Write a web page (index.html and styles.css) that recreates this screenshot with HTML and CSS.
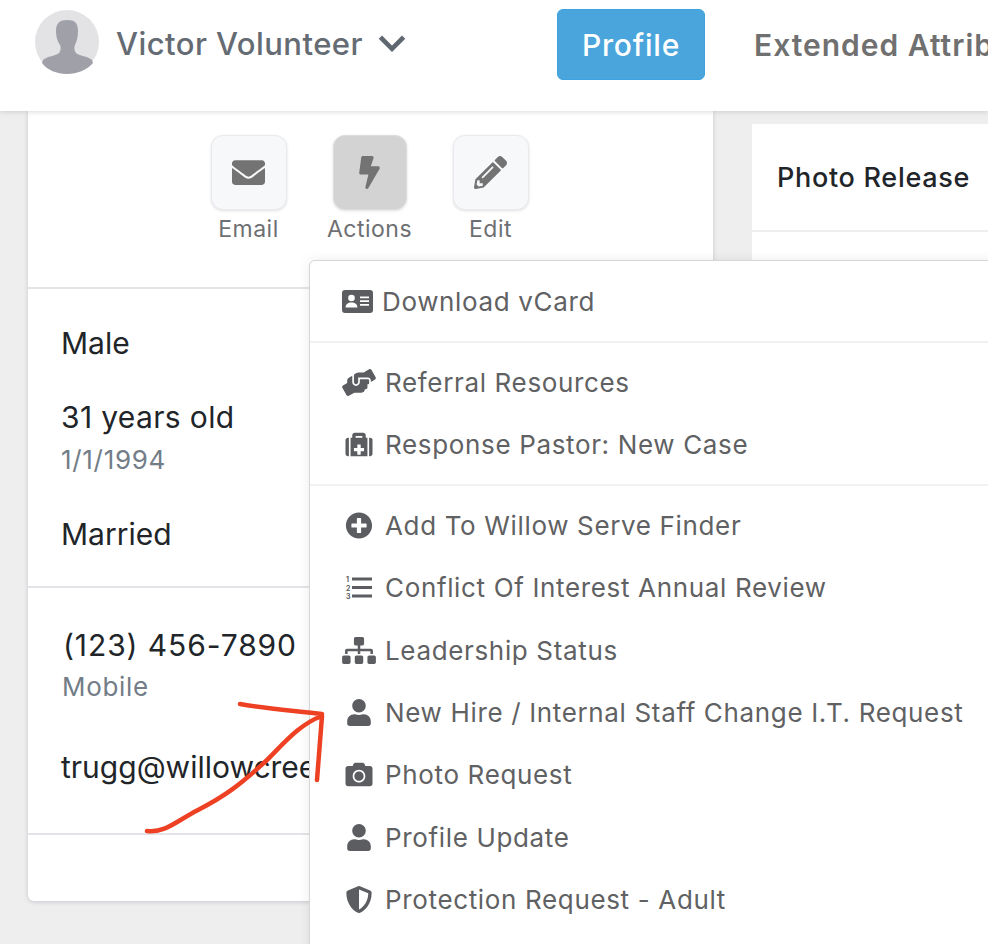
FILE: index.html
```html
<!DOCTYPE html>
<html lang="en">
<head>
<meta charset="utf-8">
<title>Victor Volunteer</title>
<link rel="stylesheet" href="styles.css">
</head>
<body>
<header class="topbar">
  <div class="person">
    <svg class="avatar" viewBox="0 0 64 64"><circle cx="32" cy="32" r="32" fill="#e3e3e6"/><path fill="#a0a0a8" d="M32 10c8 0 11 3 11 11 0 5-1 10-3 14-1 3-1 5 1 8 3 3 12 3 16 7l1 3C52 60 42 64 32 64S12 60 7 53l1-3c4-4 13-4 16-7 2-3 2-5 1-8-3-4-4-9-4-14 0-8 4-11 11-11z"/></svg>
    <span class="person-name">Victor Volunteer</span>
    <svg class="chevron" viewBox="0 0 28 18"><path d="M3 3l11 11L25 3" fill="none" stroke="#5f6770" stroke-width="4.4"/></svg>
  </div>
  <nav class="tabs">
    <a class="tab tab-active">Profile</a>
    <a class="tab">Extended Attributes</a>
  </nav>
</header>

<main class="content">
  <section class="card profile-card">
    <div class="actions">
      <div class="action">
        <span class="action-btn"><svg class="action-icon" viewBox="0 0 512 512"><path d="M502.3 190.8c3.9-3.1 9.7-.2 9.7 4.7V400c0 26.5-21.5 48-48 48H48c-26.5 0-48-21.5-48-48V195.6c0-5 5.7-7.8 9.7-4.7 22.4 17.4 52.1 39.5 154.1 113.6 21.1 15.4 56.7 47.8 92.2 47.6 35.7.3 72-32.8 92.3-47.6 102-74.1 131.6-96.3 154-113.7zM256 320c23.2.4 56.6-29.2 73.4-41.4 132.7-96.3 142.8-104.7 173.4-128.7 5.8-4.5 9.2-11.5 9.2-18.9v-19c0-26.5-21.5-48-48-48H48C21.5 64 0 85.5 0 112v19c0 7.4 3.4 14.3 9.2 18.9 30.6 23.9 40.7 32.4 173.4 128.7 16.8 12.2 50.2 41.8 73.4 41.4z"/></svg></span>
        <span class="action-label">Email</span>
      </div>
      <div class="action action-narrow">
        <span class="action-btn action-btn-on"><svg class="action-icon" viewBox="0 0 320 512"><path d="M296 160H180.6l42.6-129.8C227.2 15 215.7 0 200 0H56C44 0 33.8 8.9 32.2 20.8l-32 240C-1.7 275.2 9.5 288 24 288h118.7L96.6 482.5c-3.6 15.2 8 29.5 23.3 29.5 8.4 0 16.4-4.4 20.8-12l176-304c9.3-15.9-2.2-36-20.7-36z"/></svg></span>
        <span class="action-label">Actions</span>
      </div>
      <div class="action">
        <span class="action-btn"><svg class="action-icon" viewBox="0 0 512 512"><path d="M497.9 142.1l-46.1 46.1c-4.7 4.7-12.3 4.7-17 0l-111-111c-4.7-4.7-4.7-12.3 0-17l46.1-46.1c18.7-18.7 49.1-18.7 67.9 0l60.1 60.1c18.8 18.7 18.8 49.1 0 67.9zM284.2 99.8L21.6 362.4.4 483.9c-2.9 16.4 11.4 30.6 27.8 27.8l121.5-21.3 262.6-262.6c4.7-4.7 4.7-12.3 0-17l-111-111c-4.8-4.7-12.4-4.7-17.1 0zM124.1 339.9c-5.5-5.5-5.5-14.3 0-19.8l154-154c5.5-5.5 14.3-5.5 19.8 0s5.5 14.3 0 19.8l-154 154c-5.5 5.5-14.3 5.5-19.8 0zM88 424h48v36.3l-64.5 11.3-31.1-31.1L51.7 376H88v48z"/></svg></span>
        <span class="action-label">Edit</span>
      </div>
    </div>
    <div class="facts">
      <p class="fact">Male</p>
      <p class="fact fact-age">31 years old</p>
      <p class="fact-sub fact-sub-date">1/1/1994</p>
      <p class="fact fact-married">Married</p>
    </div>
    <div class="contact">
      <p class="fact fact-phone">(123) 456-7890</p>
      <p class="fact-sub fact-sub-mobile">Mobile</p>
      <p class="fact fact-email">trugg@willowcreek.org</p>
    </div>
    <div class="card-foot"></div>
  </section>

  <section class="card release-card">
    <h2 class="release-title">Photo Release</h2>
    <div class="release-body"></div>
  </section>
</main>

<div class="menu">
  <div class="menu-group">
    <a class="menu-item menu-item-tight"><svg class="menu-icon" viewBox="0 0 31 24"><rect width="31" height="23" y=".5" rx="3"/><circle cx="9.5" cy="8.5" r="3.3" fill="#fff"/><path fill="#fff" d="M3.6 18c0-3.5 2.4-5 5.9-5s5.9 1.5 5.900 5z"/><path fill="#fff" d="M18 7h9v1.700h-9zM18 10.800h9v1.700h-9zM18 14.600h9v1.700h-9z"/></svg><span>Download vCard</span></a>
  </div>
  <div class="menu-group">
    <a class="menu-item"><svg class="menu-icon" viewBox="0 0 640 512"><path d="M488 192H336v56c0 39.7-32.3 72-72 72s-72-32.3-72-72V126.4l-64.9 39C107.8 176.9 96 197.8 96 220.2v47.3l-80 46.2C.7 322.5-4.6 342.1 4.3 357.4l80 138.6c8.8 15.3 28.4 20.5 43.7 11.7L231.4 448H368c35.3 0 64-28.7 64-64h16c17.7 0 32-14.3 32-32v-64h8c13.3 0 24-10.7 24-24v-48c0-13.3-10.7-24-24-24zm147.7-37.4L555.7 16C546.9.7 527.3-4.5 512 4.3L408.6 64H306.4c-12 0-23.7 3.4-33.9 9.7L239 94.6c-9.4 5.8-15 16.1-15 27.1V248c0 22.1 17.9 40 40 40s40-17.9 40-40v-88h184c30.9 0 56 25.1 56 56v28.5l80-46.2c15.3-8.9 20.5-28.4 11.7-43.7z"/></svg><span>Referral Resources</span></a>
    <a class="menu-item"><svg class="menu-icon" viewBox="0 0 512 512"><path d="M96 480h320V128h-32V80c0-26.51-21.49-48-48-48H176c-26.51 0-48 21.49-48 48v48H96v352zm96-384h128v32H192V96zm160 248v32c0 4.418-3.582 8-8 8h-56v56c0 4.418-3.582 8-8 8h-48c-4.418 0-8-3.582-8-8v-56h-56c-4.418 0-8-3.582-8-8v-48c0-4.418 3.582-8 8-8h56v-56c0-4.418 3.582-8 8-8h48c4.418 0 8 3.582 8 8v56h56c4.418 0 8 3.582 8 8v16zM512 160v272c0 26.51-21.49 48-48 48h-16V128h16c26.51 0 48 14 48 32zM64 480H48c-26.51 0-48-21.49-48-48V176c0-26.51 21.49-48 48-48h16v352z"/></svg><span>Response Pastor: New Case</span></a>
  </div>
  <div class="menu-group">
    <a class="menu-item"><svg class="menu-icon" viewBox="0 0 512 512"><path d="M256 8C119 8 8 119 8 256s111 248 248 248 248-111 248-248S393 8 256 8zm144 276c0 6.6-5.4 12-12 12h-92v92c0 6.6-5.4 12-12 12h-56c-6.6 0-12-5.4-12-12v-92h-92c-6.6 0-12-5.4-12-12v-56c0-6.6 5.4-12 12-12h92v-92c0-6.6 5.4-12 12-12h56c6.6 0 12 5.4 12 12v92h92c6.6 0 12 5.4 12 12v56z"/></svg><span>Add To Willow Serve Finder</span></a>
    <a class="menu-item"><svg class="menu-icon" viewBox="0 0 34 26"><text class="list-num" x="4" y="7.500">1</text><text class="list-num" x="4" y="16">2</text><text class="list-num" x="4" y="24.500">3</text><path d="M10 3h20v3H10zM10 11.500h20v3H10zM10 20h20v3H10z"/></svg><span>Conflict Of Interest Annual Review</span></a>
    <a class="menu-item"><svg class="menu-icon" viewBox="0 0 640 512"><path d="M128 352H32c-17.670 0-32 14.330-32 32v96c0 17.670 14.330 32 32 32h96c17.670 0 32-14.330 32-32v-96c0-17.670-14.330-32-32-32zm-24-80h192v48h48v-48h192v48h48v-57.590c0-21.170-17.230-38.410-38.410-38.410H344v-64h40c17.670 0 32-14.330 32-32V32c0-17.670-14.330-32-32-32H256c-17.670 0-32 14.330-32 32v96c0 17.670 14.330 32 32 32h40v64H94.410C73.230 224 56 241.230 56 262.410V320h48v-48zm264 80h-96c-17.670 0-32 14.330-32 32v96c0 17.670 14.330 32 32 32h96c17.670 0 32-14.330 32-32v-96c0-17.670-14.330-32-32-32zm240 0h-96c-17.670 0-32 14.330-32 32v96c0 17.670 14.330 32 32 32h96c17.670 0 32-14.330 32-32v-96c0-17.670-14.330-32-32-32z"/></svg><span>Leadership Status</span></a>
    <a class="menu-item"><svg class="menu-icon" viewBox="0 0 448 512"><path d="M224 256c70.700 0 128-57.300 128-128S294.700 0 224 0 96 57.300 96 128s57.300 128 128 128zm89.600 32h-16.700c-22.200 10.200-46.900 16-72.900 16s-50.600-5.800-72.900-16h-16.700C60.200 288 0 348.200 0 422.400V464c0 26.500 21.500 48 48 48h352c26.500 0 48-21.500 48-48v-41.600c0-74.200-60.200-134.400-134.400-134.400z"/></svg><span>New Hire / Internal Staff Change I.T. Request</span></a>
    <a class="menu-item"><svg class="menu-icon" viewBox="0 0 512 512"><path d="M512 144v288c0 26.500-21.500 48-48 48H48c-26.500 0-48-21.500-48-48V144c0-26.500 21.500-48 48-48h88l12.300-32.900c7-18.700 24.900-31.100 44.900-31.100h125.500c20 0 37.900 12.400 44.900 31.100L376 96h88c26.500 0 48 21.500 48 48zM376 288c0-66.200-53.800-120-120-120s-120 53.800-120 120 53.800 120 120 120 120-53.800 120-120zm-32 0c0 48.500-39.500 88-88 88s-88-39.500-88-88 39.500-88 88-88 88 39.500 88 88z"/></svg><span>Photo Request</span></a>
    <a class="menu-item"><svg class="menu-icon" viewBox="0 0 448 512"><path d="M224 256c70.700 0 128-57.300 128-128S294.700 0 224 0 96 57.300 96 128s57.300 128 128 128zm89.600 32h-16.700c-22.200 10.200-46.900 16-72.900 16s-50.600-5.800-72.900-16h-16.700C60.200 288 0 348.200 0 422.400V464c0 26.500 21.500 48 48 48h352c26.500 0 48-21.500 48-48v-41.600c0-74.200-60.200-134.400-134.400-134.400z"/></svg><span>Profile Update</span></a>
    <a class="menu-item"><svg class="menu-icon" viewBox="0 0 512 512"><path d="M466.500 83.700l-192-80a48.150 48.150 0 0 0-36.900 0l-192 80C27.700 91.100 16 108.600 16 128c0 198.500 114.500 335.700 221.500 380.300 11.800 4.900 25.100 4.900 36.900 0C360.100 472.600 496 349.300 496 128c0-19.400-11.700-36.900-29.500-44.300zM256.100 446.300l-.1-381 175.900 73.300c-3.300 151.400-82.100 261.100-175.800 307.700z"/></svg><span>Protection Request - Adult</span></a>
  </div>
</div>

<svg class="scribble" viewBox="0 0 988 944"><path d="M147 831C165 833 175 822 198 810C225 796 240 785 267 760C285 742 300 724 322 716M240 704C265 709 300 711 322 714M322 716L317 780"/></svg>
</body>
</html>
```
FILE: styles.css
```css
* { box-sizing: border-box; }
html, body { margin: 0; height: 944px; overflow: hidden; }
body {
  position: relative;
  background: #eeeeee;
  font-family: Inter, "Liberation Sans", sans-serif;
  color: #212529;
}
p, h2 { margin: 0; }

.topbar {
  position: relative;
  z-index: 2;
  display: flex;
  align-items: flex-start;
  height: 111px;
  padding: 9px 0 0 35px;
  background: #fff;
  box-shadow: 0 1px 5px rgba(0, 0, 0, .14);
  overflow: hidden;
}
.person { display: flex; align-items: center; flex: none; width: 522px; height: 66px; }
.avatar { width: 64px; height: 64px; flex: none; }
.person-name { margin: 2px 0 0 17px; font-size: 31px; letter-spacing: .45px; font-weight: 500; color: #646b73; white-space: nowrap; }
.chevron { width: 30px; height: 19px; margin: 2px 0 0 14px; }
.tabs { display: flex; align-items: center; gap: 49px; flex: none; }
.tab { font-size: 30px; letter-spacing: 1px; font-weight: 600; color: #707070; white-space: nowrap; }
.tab-active {
  display: flex; align-items: center; justify-content: center;
  width: 148px; height: 71px;
  background: #4aa5dc; border: 1px solid #3ea2de; border-radius: 6px;
  color: #fff; font-weight: 500; font-size: 30px; letter-spacing: .8px;
}

.content { display: flex; align-items: flex-start; gap: 39px; padding-left: 28px; }
.card { background: #fff; }
.profile-card {
  width: 685px; flex: none;
  border-radius: 0 0 6px 6px;
  box-shadow: 0 1px 4px rgba(60, 70, 90, .22);
}
.actions {
  display: flex; justify-content: center; gap: 46px;
  height: 178px; padding: 24px 2px 0 0;
  border-bottom: 2px solid #e2e4e8;
}
.action { display: flex; flex-direction: column; align-items: center; width: 76px; }
.action-narrow { width: 74px; }
.action-btn {
  display: flex; align-items: center; justify-content: center;
  width: 100%; height: 75px;
  background: #f7f8fa; border: 1px solid #e9eaee; border-radius: 12px;
  box-shadow: 0 1px 3px rgba(0, 0, 0, .12);
}
.action-btn-on { background: #d3d3d3; border-color: #dcdcdc; }
.action-icon { width: 33px; height: 33px; fill: #737373; }
.action-label { margin-top: 5px; font-size: 23px; letter-spacing: .5px; line-height: 28px; color: #6d6f72; white-space: nowrap; }

.facts { height: 299px; padding: 34px 0 0 33px; border-bottom: 2px solid #e2e4e8; }
.contact { height: 247px; padding: 37px 0 0 33px; border-bottom: 2px solid #e2e4e8; overflow: hidden; }
.card-foot { height: 66px; }
.fact { font-size: 30px; line-height: 40px; color: #212529; white-space: nowrap; }
.fact-age { margin-top: 34px; letter-spacing: .35px; }
.fact-sub { font-size: 26px; line-height: 34px; color: #737d87; letter-spacing: .7px; }
.fact-sub-date { margin-top: 6px; }
.fact-married { margin-top: 37px; }
.fact-phone { padding-left: 2px; letter-spacing: .9px; }
.fact-sub-mobile { margin-top: 5px; padding-left: 1px; }
.fact-email { margin-top: 43px; }

.release-card { flex: 1; margin-top: 13px; min-width: 0; }
.release-title {
  height: 108px; padding: 0 0 0 25px;
  font-size: 27px; letter-spacing: .7px; line-height: 107px; font-weight: 500; color: #212529;
  border-bottom: 2px solid #eeeeee;
}
.release-body { height: 200px; }

.menu {
  position: absolute; z-index: 3;
  left: 309px; top: 260px;
  width: 720px;
  background: #fff;
  border: 1px solid #d6d6d6; border-radius: 6px;
  box-shadow: 0 0 12px rgba(0, 0, 0, .08);
}
.menu-group { padding: 8px 0; border-bottom: 2px solid #f1f1f1; }
.menu-group:first-child { padding: 9px 0 9px; }
.menu-group:last-child { padding-bottom: 60px; border-bottom: 0; }
.menu-item {
  display: flex; align-items: center; gap: 9px;
  height: 62.4px; padding-left: 32px;
  font-size: 26px; letter-spacing: .65px; color: #5f6163; white-space: nowrap;
}
.menu-icon { width: 34px; height: 27px; flex: none; fill: #5b5d60; }
.menu-item-tight .menu-icon { width: 31px; height: 25px; }
.list-num { font-size: 7px; font-weight: 700; fill: #5b5d60; }

.scribble {
  position: absolute; z-index: 4;
  left: 0; top: 0; width: 988px; height: 944px;
  pointer-events: none;
}
.scribble path { fill: none; stroke: #ee4023; stroke-width: 4.5; stroke-linecap: round; stroke-linejoin: round; }
```
